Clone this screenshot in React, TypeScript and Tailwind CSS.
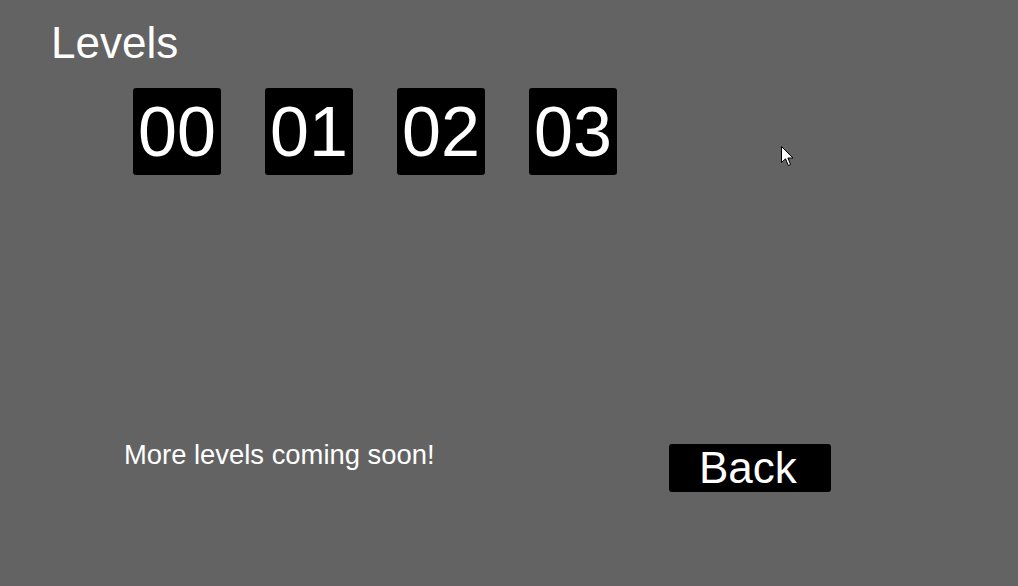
const levels = ['00', '01', '02', '03']

function Cursor() {
  return (
    <svg
      className="absolute left-[781px] top-[146px]"
      width="13"
      height="21"
      viewBox="0 0 13 21"
    >
      <path
        d="M0.5 0.5 L0.5 16.5 L4.5 12.8 L7.3 19.5 L9.6 18.5 L6.9 12 L12 12 Z"
        fill="#ffffff"
        stroke="#000000"
        strokeWidth="1"
        strokeLinejoin="miter"
      />
    </svg>
  )
}

export default function App() {
  return (
    <div
      className="relative h-[586px] w-[1018px] overflow-hidden bg-[#636363] text-white"
      style={{ fontFamily: '"Liberation Sans", Arial, sans-serif' }}
    >
      <div className="pt-[21px] pl-[51px]">
        <h1 className="text-[44px] leading-none font-normal">Levels</h1>
      </div>

      <div className="mt-[23px] ml-[133px] flex gap-[44px]">
        {levels.map((level) => (
          <button
            key={level}
            className="flex h-[87px] w-[88px] items-center justify-center rounded-[3px] bg-black text-[70px] leading-none"
          >
            {level}
          </button>
        ))}
      </div>

      <div className="mt-[266px] ml-[124px] flex items-start">
        <p className="w-[545px] text-[27.4px] leading-none">More levels coming soon!</p>
        <button className="mt-[3px] flex h-[48px] w-[162px] items-center rounded-[3px] bg-black pl-[30px] text-[44px] leading-none">
          Back
        </button>
      </div>

      <Cursor />
    </div>
  )
}
